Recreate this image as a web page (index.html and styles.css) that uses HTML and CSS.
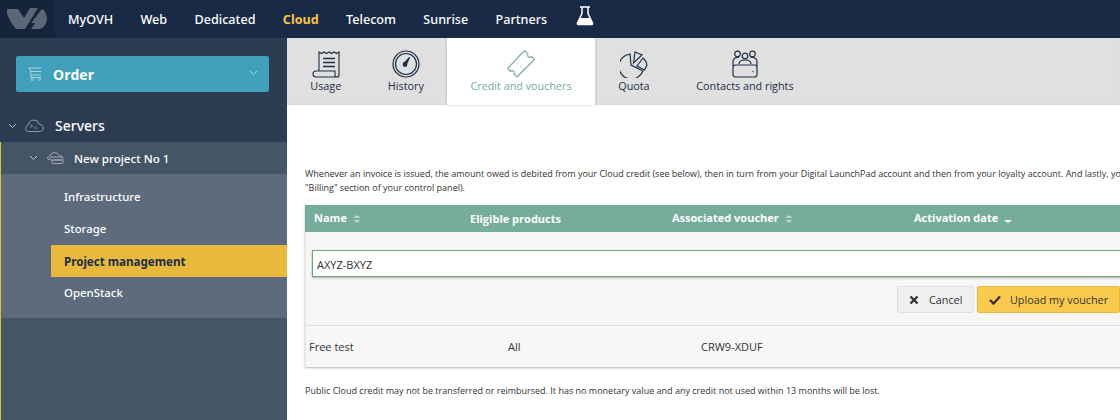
FILE: index.html
```html
<!DOCTYPE html>
<html lang="en">
<head>
    <meta charset="UTF-8">
    <meta name="viewport" content="width=device-width, initial-scale=1.0">
    <title>Credit and vouchers</title>
    <link rel="stylesheet" href="styles.css">
</head>
<body>
    <header class="topbar">
        <div class="logo">
            <svg width="55" height="38" viewBox="0 0 55 38">
                <path d="M7 9h11l6 9 6-10h8L25 29h-9Q9 21 7 13z" fill="#5b6676"/>
                <path d="M43 9q4 5 4 10-1 8-7 10h-9l4-6h-4l10-13z" fill="#5b6676"/>
            </svg>
        </div>
        <nav class="topnav">
            <a>MyOVH</a>
            <a>Web</a>
            <a>Dedicated</a>
            <a class="current">Cloud</a>
            <a>Telecom</a>
            <a>Sunrise</a>
            <a>Partners</a>
            <svg class="flask" width="18" height="20" viewBox="0 0 18 20">
                <path d="M4 1h10M6 1.500v6L1.500 17q-.5 1.500 1 1.500h13q1.500 0 1-1.500L12 7.500v-6" fill="none" stroke="#fff" stroke-width="1.500"/>
                <path d="M4 12h10l3 6.500H1z" fill="#fff"/>
            </svg>
        </nav>
    </header>

    <div class="layout">
        <aside class="sidebar">
            <div class="order">
                <svg width="16" height="14" viewBox="0 0 16 14" fill="none" stroke="#a5d3e0">
                    <path d="M1 1h13.500M3 1l1 7h10M3.500 4.500h11M4 8v2.500h10"/>
                    <circle cx="5" cy="12.500" r="1"/>
                    <circle cx="12.500" cy="12.500" r="1"/>
                </svg>
                <span class="order-label">Order</span>
                <svg class="chev" width="9" height="6" viewBox="0 0 9 6"><path d="M1 1l3.500 3.500L8 1" fill="none" stroke="#a5d3e0"/></svg>
            </div>

            <div class="servers">
                <svg class="chev" width="9" height="6" viewBox="0 0 9 6"><path d="M1 1l3.500 3.500L8 1" fill="none" stroke="#aeb5bf"/></svg>
                <svg width="19" height="13" viewBox="0 0 19 13" fill="none" stroke="#8f98a5">
                    <path d="M4 12.500H3Q.5 12 .5 9.500 .5 7 3 6.500 4 1 9 1q4 0 5 4 4 .5 4.500 4 0 3-3 3.500z"/>
                    <path d="M5.500 5.500l2 1.500-2 1.500M9 9h3"/>
                </svg>
                <span>Servers</span>
            </div>

            <div class="tree">
                <div class="project">
                    <svg class="chev" width="9" height="6" viewBox="0 0 9 6"><path d="M1 1l3.500 3.500L8 1" fill="none" stroke="#c3c8cf"/></svg>
                    <svg width="17" height="12" viewBox="0 0 17 12" fill="none" stroke="#a1a9b3">
                        <path d="M2.500 8Q.5 7.500.5 6 1 4.500 2.500 4 4 .5 8 .5q3 0 4 3 2.500 0 3.500 2"/>
                        <rect x="3" y="5" width="13" height="3" rx="1"/>
                        <rect x="5" y="8" width="11" height="3.500" rx="1"/>
                    </svg>
                    <span>New project No 1</span>
                </div>
                <ul class="subnav">
                    <li>Infrastructure</li>
                    <li>Storage</li>
                    <li class="active">Project management</li>
                    <li>OpenStack</li>
                </ul>
            </div>
        </aside>

        <main class="main">
            <div class="tabs">
                <div class="tab">
                    <svg width="28" height="28" viewBox="0 0 28 28" fill="none" stroke="#1c2e46" stroke-width="1.100">
                        <path d="M7 21V2l2.500 1.500L12 2l2.500 1.500L17 2l2.500 1.500L22 2l2.500 1.500L27 2v23q0 2-2 2t-2-2v-4H4q-3 0-3 3t3 3h21"/>
                        <path d="M11 8.500h12M11 12.500h12M11 16.500h12" stroke-width="1.300"/>
                    </svg>
                    <span>Usage</span>
                </div>
                <div class="tab">
                    <svg width="28" height="28" viewBox="0 0 28 28" fill="none" stroke="#1c2e46" stroke-width="1.200">
                        <circle cx="14" cy="14" r="13"/>
                        <circle cx="14" cy="14" r="10.500"/>
                        <path d="M12.500 13l5-5.500-3 6.500z" fill="#1c2e46"/>
                        <circle cx="13" cy="14.500" r="1.800" fill="#1c2e46"/>
                    </svg>
                    <span>History</span>
                </div>
                <div class="tab tab-active">
                    <svg width="28" height="28" viewBox="0 0 28 28" fill="none" stroke="#75ac9c" stroke-width="1.100">
                        <path d="M18 1l3 3q-1 2 .5 3t3-.5l2.500 2.500q.5.500 0 1L10.500 26.500q-.5.500-1 0L7 24q1-2-.5-3t-3 .5L1 19q-.5-.5 0-1L17 1q.5-.5 1 0z"/>
                        <path d="M10.500 13.500l.5.5M13.500 16.500l.5.5M16 19l.5.5" stroke-width="1.300"/>
                    </svg>
                    <span>Credit and vouchers</span>
                </div>
                <div class="tab">
                    <svg width="28" height="28" viewBox="0 0 28 28" fill="none" stroke="#1c2e46" stroke-width="1.200">
                        <path d="M10 4A12.500 12.500 0 1 0 23 21L11 15z"/>
                        <path d="M13.500 13L15 2l7 3z"/>
                        <path d="M17 16l6-8q3.500 3 4 7l-2.500 5z"/>
                    </svg>
                    <span>Quota</span>
                </div>
                <div class="tab">
                    <svg width="28" height="28" viewBox="0 0 28 28" fill="none" stroke="#1c2e46" stroke-width="1.200">
                        <circle cx="6.500" cy="4" r="2.800"/>
                        <circle cx="14" cy="6" r="2.800"/>
                        <circle cx="21.500" cy="4" r="2.800"/>
                        <path d="M2 16v-4q0-4 4-4.500h2M26 16v-4q0-4-4-4.500h-2M8 14q0-4 6-4t6 4"/>
                        <rect x="2" y="15" width="24" height="12" rx="2.500"/>
                        <path d="M21.500 21.500h1" stroke-width="1.500"/>
                    </svg>
                    <span>Contacts and rights</span>
                </div>
            </div>

            <div class="content">
                <p class="intro">Whenever an invoice is issued, the amount owed is debited from your Cloud credit (see below), then in turn from your Digital LaunchPad account and then from your loyalty account. And lastly, you can view your payment details in the<br>"Billing" section of your control panel).</p>

                <div class="table">
                    <div class="thead">
                        <div class="th">Name <i class="sort"></i></div>
                        <div class="th th-low">Eligible products</div>
                        <div class="th">Associated voucher <i class="sort"></i></div>
                        <div class="th">Activation date <i class="sort-down"></i></div>
                    </div>
                    <div class="tbody">
                        <div class="voucher-form">
                            <input class="voucher-input" type="text" value="AXYZ-BXYZ">
                            <div class="actions">
                                <button class="btn btn-cancel">
                                    <svg width="10" height="10" viewBox="0 0 10 10"><path d="M1.500 1.500l7 7M8.500 1.500l-7 7" stroke="#333" stroke-width="2.400" fill="none"/></svg>
                                    Cancel
                                </button>
                                <button class="btn btn-upload">
                                    <svg width="12" height="10" viewBox="0 0 12 10"><path d="M1 5l3.500 3.500L11 1.500" stroke="#333" stroke-width="2.400" fill="none"/></svg>
                                    Upload my voucher
                                </button>
                            </div>
                        </div>
                        <div class="row">
                            <div>Free test</div>
                            <div>All</div>
                            <div>CRW9-XDUF</div>
                        </div>
                    </div>
                </div>

                <p class="note">Public Cloud credit may not be transferred or reimbursed. It has no monetary value and any credit not used within 13 months will be lost.</p>
            </div>
        </main>
    </div>
</body>
</html>
```

FILE: styles.css
```css
* {
    box-sizing: border-box;
}
html, body {
    height: 100%;
}
body {
    margin: 0;
    overflow: hidden;
    font-family: "Open Sans", sans-serif;
    color: #333;
    background: white;
}

/* top bar */
.topbar {
    display: flex;
    height: 38px;
    background: #182a46;
}
.logo {
    width: 55px;
    background: #14243a;
}
.logo svg {
    display: block;
}
.topnav {
    display: flex;
    align-items: center;
    gap: 27.400px;
    padding-left: 13px;
    font-family: "Noto Sans", sans-serif;
    font-size: 12.600px;
    font-weight: 500;
    color: white;
}
.topnav .current {
    color: #fbc146;
    font-weight: 700;
}
.flask {
    margin: -6px 0 0 1px;
}

.layout {
    display: flex;
    height: 382px;
}

/* sidebar */
.sidebar {
    display: flex;
    flex-direction: column;
    flex: 0 0 287px;
    padding-top: 18px;
    background: #2c3c53;
}
.order {
    display: flex;
    align-items: center;
    flex: none;
    height: 36px;
    margin: 0 18px 0 16px;
    padding: 0 11px;
    border-radius: 2px;
    background: #41a0bc;
    color: white;
}
.order-label {
    margin-left: 10px;
    font-size: 14px;
    font-weight: 700;
}
.order .chev {
    margin-left: auto;
    margin-top: -3px;
}
.servers {
    display: flex;
    align-items: center;
    flex: none;
    height: 32px;
    margin-top: 18px;
    padding: 0 0 1px 8px;
    font-family: "Noto Sans", sans-serif;
    font-size: 14px;
    font-weight: 500;
    color: white;
}
.servers svg:nth-child(2) {
    margin: 0 11px 0 8px;
}
.tree {
    flex: 1;
    border-left: 1px solid #e8b93c;
    background: #445566;
}
.project {
    display: flex;
    align-items: center;
    height: 32px;
    padding-left: 28px;
    font-family: "Noto Sans", sans-serif;
    font-size: 11.600px;
    font-weight: 500;
    color: white;
}
.project svg:nth-child(2) {
    margin: 0 10px 0 9px;
}
.subnav {
    margin: 0;
    padding: 7px 0 9px 50px;
    list-style: none;
    background: #5d6b7c;
    font-family: "Noto Sans", sans-serif;
    font-size: 11.400px;
    font-weight: 500;
    color: white;
}
.subnav li {
    height: 32px;
    padding-left: 13px;
    line-height: 32px;
}
.subnav .active {
    background: #e8b93c;
    color: #1c2e46;
    font-size: 11.600px;
    font-weight: 700;
    line-height: 33px;
}

/* tabs */
.main {
    flex: 1;
    min-width: 0;
    overflow: hidden;
}
.tabs {
    display: flex;
    height: 67px;
    background: #e0e0e0;
    box-shadow: inset 0 -1px 1px #d8d8d8;
}
.tab {
    display: flex;
    flex-direction: column;
    align-items: center;
    padding: 12px 23.300px 0;
    font-size: 10.800px;
    line-height: 16px;
    color: #1c2e46;
}
.tab-active {
    background: white;
    color: #75ac9c;
    box-shadow: 0 0 3px rgba(0,0,0,0.2);
}

/* content */
.content {
    width: 830px;
    margin-left: 18px;
}
.intro {
    width: 1200px;
    margin: 62px 0 10px;
    font-size: 9px;
    line-height: 14px;
}
.table {
    width: 830px;
    box-shadow: 0 1px 2px rgba(0,0,0,0.3);
}
.thead {
    display: grid;
    grid-template-columns: 156px 202px 242px 1fr;
    align-items: center;
    height: 27px;
    padding: 0 0 2px 9px;
    background: #75ac9c;
    color: white;
    font-size: 11px;
    font-weight: 700;
}
.th {
    white-space: nowrap;
}
.th-low {
    padding-top: 2px;
}
.sort {
    display: inline-block;
    position: relative;
    width: 8px;
    height: 8px;
    margin-left: 3px;
    vertical-align: -1px;
}
.sort::before, .sort::after {
    content: "";
    position: absolute;
    left: 0;
    border-left: 4px solid transparent;
    border-right: 4px solid transparent;
}
.sort::before {
    top: 0;
    border-bottom: 3px solid #b5d3ca;
}
.sort::after {
    bottom: 0;
    border-top: 3px solid #b5d3ca;
}
.sort-down {
    display: inline-block;
    margin: 0 0 -1px 3px;
    border-top: 3px solid white;
    border-left: 4px solid transparent;
    border-right: 4px solid transparent;
}
.tbody {
    border-left: 1px solid #e5e5e5;
    background: #f7f7f7;
}
.voucher-form {
    height: 94px;
    padding: 18px 0 0 6px;
    border-bottom: 1px solid #dedede;
}
.voucher-input {
    display: block;
    width: 100%;
    height: 27px;
    padding: 1px 4px 0;
    border: 1px solid #6aa677;
    border-radius: 0;
    outline: none;
    box-shadow: 0 1px 2px rgba(0,0,0,0.3);
    background: white;
    font: 11px "Open Sans", sans-serif;
    color: #333;
}
.actions {
    display: flex;
    justify-content: flex-end;
    gap: 3px;
    width: 808px;
    margin-top: 9px;
}
.btn {
    display: flex;
    align-items: center;
    height: 27px;
    border-radius: 2px;
    font: 10.800px "Open Sans", sans-serif;
    color: #333;
}
.btn-cancel {
    gap: 10px;
    width: 77px;
    padding-left: 11px;
    border: 1px solid #e0e0e0;
    background: #efefef;
}
.btn-upload {
    gap: 9px;
    width: 143px;
    padding-left: 11px;
    border: 1px solid #e8b93c;
    background: #fbc94d;
}
.row {
    display: grid;
    grid-template-columns: 199px 193px 1fr;
    align-items: center;
    height: 41px;
    padding-left: 3px;
    font-size: 11px;
}
.note {
    margin: 18px 0 0;
    font-size: 9px;
    line-height: 12px;
}
```
